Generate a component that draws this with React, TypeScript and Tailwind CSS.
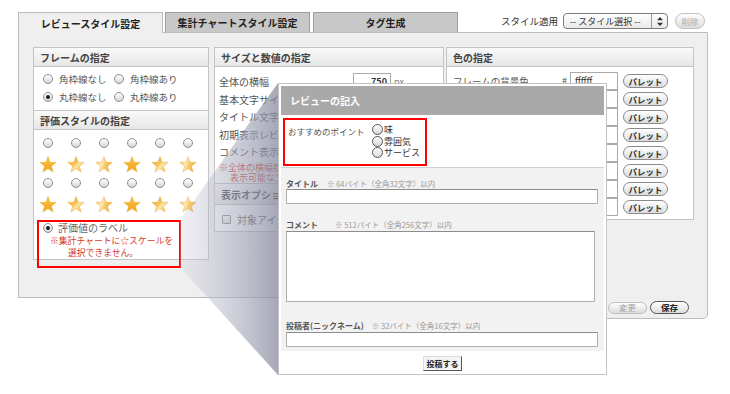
import React from "react";

function Radio({ checked = false, dark = false }: { checked?: boolean; dark?: boolean }) {
  return (
    <span
      className={
        "inline-flex shrink-0 items-center justify-center rounded-full bg-gradient-to-b from-[#ffffff] to-[#d6d6d6] border " +
        (dark ? "w-[11px] h-[11px] border-[#555555]" : "w-[10px] h-[10px] border-[#8f8f8f]")
      }
    >
      {checked && <span className="block w-[4px] h-[4px] rounded-full bg-[#1a1a1a]" />}
    </span>
  );
}

const STAR = "12,0.8 14.8,8.2 22.8,8.5 16.6,13.5 18.8,21.2 12,16.8 5.2,21.2 7.4,13.5 1.2,8.5 9.2,8.2";

function Star({ v }: { v: number }) {
  return (
    <svg width="18" height="18" viewBox="0 0 24 24">
      <polygon points={STAR} fill={`url(#sg${v})`} stroke="#e59c1a" strokeWidth="0.5" strokeLinejoin="round" />
    </svg>
  );
}

function Header({ children, h = "h-[19px]" }: { children: React.ReactNode; h?: string }) {
  return (
    <div
      className={
        h +
        " flex items-center pl-[6px] bg-gradient-to-b from-[#f9f9f9] to-[#e7e7e7] text-[10px] font-bold text-[#444] border-b border-[#c4c4c4]"
      }
    >
      {children}
    </div>
  );
}

function Pill({ children, className = "" }: { children?: React.ReactNode; className?: string }) {
  return (
    <span
      className={
        "inline-flex items-center justify-center rounded-full border bg-gradient-to-b from-[#ffffff] to-[#dcdcdc] leading-none " +
        className
      }
    >
      {children}
    </span>
  );
}

const starRow1 = [0, 1, 2, 0, 1, 2];
const starRow2 = [0, 1, 2, 0, 1, 2];

const midRows = ["全体の横幅", "基本文字サイズ", "タイトル文字サイズ", "初期表示レビュー数", "コメント表示文字数"];

export default function App() {
  return (
    <div className="relative w-[730px] h-[394px] bg-white overflow-hidden font-['Noto_Sans_CJK_JP','Liberation_Sans',sans-serif] text-[#555]">
      <svg width="0" height="0" className="absolute">
        <defs>
          <linearGradient id="sg0" x1="0" y1="0" x2="0" y2="1">
            <stop offset="0" stopColor="#fcc446" />
            <stop offset="1" stopColor="#f0a219" />
          </linearGradient>
          <linearGradient id="sg1" x1="0" y1="0" x2="1" y2="1">
            <stop offset="0" stopColor="#f3a61f" />
            <stop offset="0.45" stopColor="#f7c255" />
            <stop offset="0.58" stopColor="#fde4a4" />
            <stop offset="1" stopColor="#f1ab2d" />
          </linearGradient>
          <linearGradient id="sg2" x1="0" y1="0" x2="1" y2="0.3">
            <stop offset="0" stopColor="#f5b53a" />
            <stop offset="0.45" stopColor="#fdecbc" />
            <stop offset="0.6" stopColor="#f8d17b" />
            <stop offset="1" stopColor="#f2ae2f" />
          </linearGradient>
          <linearGradient id="shade" gradientUnits="userSpaceOnUse" x1="180" y1="0" x2="278" y2="0">
            <stop offset="0" stopColor="rgb(205,207,220)" stopOpacity="0.3" />
            <stop offset="1" stopColor="rgb(135,138,158)" stopOpacity="0.75" />
          </linearGradient>
        </defs>
      </svg>

      {/* top row: tabs + style selector */}
      <div className="flex items-start h-[33px] pt-[12px] pl-[18px] pr-[25px]">
        <div className="relative z-10 w-[145px] h-[21px] flex items-center justify-center bg-[#efefef] border border-b-0 border-[#bcbcbc] text-[10px] font-bold text-[#222]">
          レビュースタイル設定
        </div>
        <div className="ml-[2px] w-[145px] h-[20px] flex items-center justify-center bg-[#c8c8c8] border border-b-0 border-[#9d9d9d] text-[10px] font-bold text-[#222]">
          集計チャートスタイル設定
        </div>
        <div className="ml-[3px] w-[145px] h-[20px] flex items-center justify-center bg-[#c8c8c8] border border-b-0 border-[#9d9d9d] text-[10px] font-bold text-[#222]">
          タグ生成
        </div>
        <div className="ml-auto mt-[1px] flex items-center h-[16px]">
          <span className="text-[9.5px] text-[#333]">スタイル適用</span>
          <div className="ml-[5px] w-[105px] h-[16px] flex items-center rounded-[4px] border border-[#7d7d7d] bg-gradient-to-b from-[#ffffff] to-[#e8e8e8]">
            <span className="flex-1 pl-[6px] text-[9px] text-[#333] leading-none">-- スタイル選択 --</span>
            <span className="w-[16px] h-full flex items-center justify-center border-l border-[#9a9a9a]">
              <svg width="6" height="9" viewBox="0 0 6 9">
                <polygon points="3,0 6,3.3 0,3.3" fill="#333" />
                <polygon points="0,5.7 6,5.7 3,9" fill="#333" />
              </svg>
            </span>
          </div>
          <Pill className="ml-[7px] w-[30px] h-[16px] border-[#c2c2c2] text-[8.5px] text-[#aaa]">削除</Pill>
        </div>
      </div>

      {/* main panel */}
      <div className="-mt-px ml-[18px] w-[690px] h-[287px] flex flex-col border border-[#bcbcbc] rounded-b-[5px] bg-[#efefef]">
        <div className="flex items-start pt-[14px] pl-[14px]">
          {/* left column */}
          <div className="w-[176px] border border-[#c4c4c4] bg-white">
            <Header>フレームの指定</Header>
            <div className="h-[44px] border-b border-[#c4c4c4] pt-[3px] pl-[9px] text-[9.5px]">
              <div className="flex items-center h-[18px]">
                <Radio />
                <span className="ml-[6px] w-[55px]">角枠線なし</span>
                <Radio />
                <span className="ml-[6px]">角枠線あり</span>
              </div>
              <div className="flex items-center h-[18px]">
                <Radio checked />
                <span className="ml-[6px] w-[55px]">丸枠線なし</span>
                <Radio />
                <span className="ml-[6px]">丸枠線あり</span>
              </div>
            </div>
            <Header>評価スタイルの指定</Header>
            <div className="h-[129px] pt-[6px]">
              <div className="grid grid-cols-6 w-[168px] h-[14px]">
                {starRow1.map((_, i) => (
                  <div key={i} className="flex items-center justify-center">
                    <Radio />
                  </div>
                ))}
              </div>
              <div className="grid grid-cols-6 w-[168px] h-[22px] mt-[4px]">
                {starRow1.map((v, i) => (
                  <div key={i} className="flex items-center justify-center">
                    <Star v={v} />
                  </div>
                ))}
              </div>
              <div className="grid grid-cols-6 w-[168px] h-[14px]">
                {starRow2.map((_, i) => (
                  <div key={i} className="flex items-center justify-center">
                    <Radio />
                  </div>
                ))}
              </div>
              <div className="grid grid-cols-6 w-[168px] h-[22px] mt-[4px]">
                {starRow2.map((v, i) => (
                  <div key={i} className="flex items-center justify-center">
                    <Star v={v} />
                  </div>
                ))}
              </div>
              <div className="flex items-center h-[12px] mt-[6px] pl-[9px]">
                <Radio checked />
                <span className="ml-[5px] text-[10px] leading-none text-[#666]">評価値のラベル</span>
              </div>
              <div className="mt-[1px] pl-[16px] text-[8.8px] leading-[12px] text-[#d43a2f]">※集計チャートに☆スケールを</div>
              <div className="pl-[34px] text-[8.8px] leading-[12px] text-[#d43a2f]">選択できません。</div>
            </div>
          </div>

          {/* middle column */}
          <div className="ml-[5px] w-[230px] border border-[#c4c4c4] bg-white">
            <Header>サイズと数値の指定</Header>
            <div className="h-[117px] border-b border-[#c4c4c4] pt-[6px] pl-[4px] text-[10px]">
              {midRows.map((r, i) => (
                <div key={r} className="flex items-center h-[17.5px]">
                  <span className="w-[134px] whitespace-nowrap">{r}</span>
                  <span className="w-[38px] h-[17px] border border-[#aaa] bg-white flex items-center justify-end pr-[3px] text-[9px] font-bold text-[#333]">
                    {i === 0 ? "750" : ""}
                  </span>
                  {i === 0 && <span className="ml-[3px] text-[9px] text-[#777]">px</span>}
                </div>
              ))}
              <div className="mt-[2.5px] text-[9px] leading-[9.5px] text-[#d43a2f]">
                <div>※全体の横幅指定に</div>
                <div className="pl-[11px]">表示可能な文字</div>
              </div>
            </div>
            <Header h="h-[21px]">表示オプション</Header>
            <div className="h-[26px] pt-[3px] pl-[7px] flex items-center text-[10px]">
              <span className="w-[9px] h-[9px] border border-[#8f8f8f] bg-gradient-to-b from-white to-[#e0e0e0] rounded-[1px]" />
              <span className="ml-[6px]">対象アイテム</span>
            </div>
          </div>

          {/* right column */}
          <div className="ml-[2px] w-[248px] border border-[#c4c4c4] bg-white">
            <Header>色の指定</Header>
            <div className="h-[152px] pt-[5px]">
              {[0, 1, 2, 3, 4, 5, 6, 7].map((i) => (
                <div key={i} className="flex items-center h-[18px] pl-[6px] pr-[25px]">
                  <span className="flex-1 text-[9.5px] whitespace-nowrap">{i === 0 ? "フレームの背景色" : ""}</span>
                  <span className="text-[9px] mr-[2px] w-[6px]">{i === 0 ? "#" : ""}</span>
                  <span className="w-[48px] h-[18px] border border-[#aaa] bg-white flex items-center pl-[4px] text-[9px] text-[#333]">
                    {i === 0 ? "ffffff" : ""}
                  </span>
                  <Pill className="ml-[5px] w-[45px] h-[14px] border-[#8a8a8a] text-[8.5px] font-bold text-[#333]">
                    パレット
                  </Pill>
                </div>
              ))}
            </div>
          </div>
        </div>

        {/* footer */}
        <div className="mt-auto flex items-start h-[21px]">
          <div className="-ml-px w-[263px] h-[23px] bg-white border-t border-[#bcbcbc]" />
          <div className="ml-auto mt-[4px] mr-[18px] flex items-center">
            <Pill className="w-[39px] h-[12px] border-[#c0c0c0] text-[8.5px] text-[#a0a0a0]">変更</Pill>
            <Pill className="ml-[3px] w-[39px] h-[13px] border-[#555] text-[8.5px] font-bold text-[#222]">保存</Pill>
          </div>
        </div>
      </div>

      {/* annotation: left red box */}
      <div className="absolute left-[37px] top-[220px] w-[144px] h-[48px] border-2 border-[#ff0000]" />

      {/* projection shade */}
      <svg className="absolute left-0 top-0 pointer-events-none" width="730" height="394">
        <polygon points="180,220 278,83 278,375 180,267" fill="url(#shade)" />
      </svg>

      {/* popup */}
      <div className="absolute left-[278px] top-[83px] w-[329px] h-[292px] flex flex-col border border-[#c4c4c4] bg-white p-[2px]">
        <div className="h-[29px] shrink-0 flex items-center pl-[9px] bg-[#a9a9a9] text-[10px] font-bold text-white">
          レビューの記入
        </div>
        <div className="h-[53px] shrink-0 pt-[3px] pl-[2px] border-b border-[#cfcfcf]">
          <div className="w-[144px] h-[48px] border-2 border-[#ff0000] flex pt-[4px] pl-[3px] text-[8.5px] text-[#555]">
            <span className="w-[84px] leading-none mt-[3px]">おすすめのポイント</span>
            <div className="flex flex-col">
              {["味", "雰囲気", "サービス"].map((t) => (
                <div key={t} className="flex items-center h-[11.5px]">
                  <Radio dark />
                  <span className="ml-[1px] text-[9px] leading-none text-[#333]">{t}</span>
                </div>
              ))}
            </div>
          </div>
        </div>
        <div className="h-[183px] shrink-0 bg-[#f2f2f2] px-[5px] pt-[10px]">
          <div className="h-[11px] flex items-center">
            <span className="text-[8px] font-bold text-[#555] leading-none">タイトル</span>
            <span className="ml-[9px] text-[7.5px] text-[#999] leading-none">※ 64バイト（全角32文字）以内</span>
          </div>
          <div className="w-[312px] h-[15px] bg-white border border-[#b0b0b0] border-t-[#8c8c8c]" />
          <div className="mt-[14px] h-[13px] flex items-center">
            <span className="text-[8px] font-bold text-[#555] leading-none">コメント</span>
            <span className="ml-[17px] text-[7.5px] text-[#999] leading-none">※ 512バイト（全角256文字）以内</span>
          </div>
          <div className="w-[309px] h-[71px] bg-white border border-[#b0b0b0] border-t-[#8c8c8c]" />
          <div className="mt-[18px] h-[12px] flex items-center">
            <span className="text-[8px] font-bold text-[#555] leading-none">投稿者(ニックネーム)</span>
            <span className="ml-[8px] text-[7.5px] text-[#999] leading-none">※ 32バイト（全角16文字）以内</span>
          </div>
          <div className="w-[312px] h-[15px] bg-white border border-[#b0b0b0] border-t-[#8c8c8c]" />
        </div>
        <div className="flex-1 flex justify-center pt-[5px]">
          <span className="w-[39px] h-[15px] flex items-center justify-center bg-[#f4f4f4] border border-[#dddddd] border-r-[#555] border-b-[#555] text-[8px] font-bold text-[#222] leading-none">
            投稿する
          </span>
        </div>
      </div>
    </div>
  );
}
